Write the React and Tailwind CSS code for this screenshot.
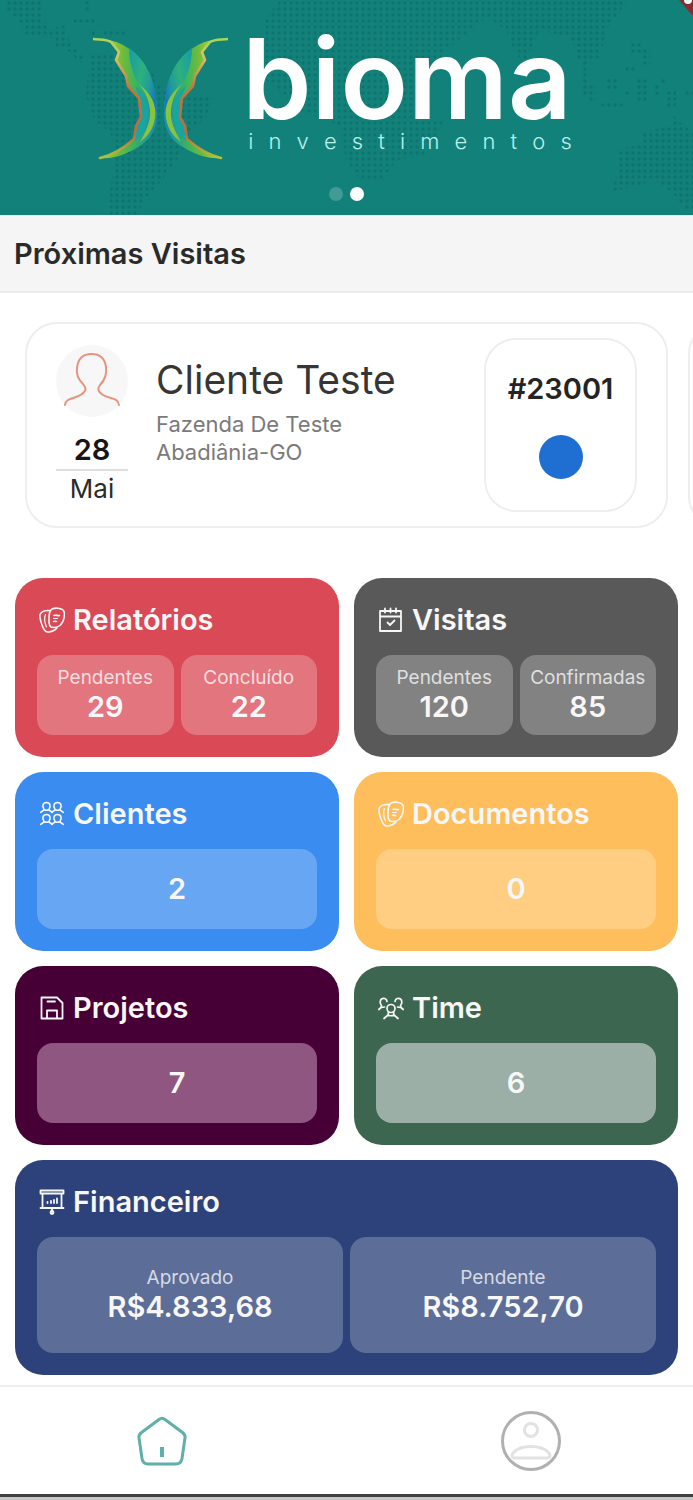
import React from "react";

function WorldDots() {
  return (
    <svg
      className="absolute inset-0 h-full w-full"
      viewBox="0 0 693 215"
      preserveAspectRatio="xMidYMid slice"
      aria-hidden="true"
    >
      <defs>
        <pattern id="dots" width="6" height="6" patternUnits="userSpaceOnUse">
          <circle cx="3" cy="3" r="1.7" fill="#0d6f6a" />
        </pattern>
      </defs>
      <g fill="url(#dots)" opacity="0.7">
        <path d="M6 0H42V22H48V30L66 24V36L78 50L86 62H80L70 52L56 46V38L26 36L18 18L6 12Z" />
        <path d="M74 18H96V24H74ZM84 0H90V12H84ZM96 24H104V36H126V30H108ZM90 30H96V36H90Z" />
        <path d="M90 54H114L150 68L162 90L190 94L212 98L206 118L190 132L180 156L162 180L144 200L138 215H110V190L116 156L110 132L94 120L86 96Z" />
        <path d="M280 0H628L606 30L600 60H582L570 38L540 30L526 60L516 56L506 30L486 18L446 50L432 80L414 110L444 122L424 156L396 160L384 180H360L346 160L340 126L300 110L266 80L262 24Z" />
        <path d="M576 36H582V60H576ZM582 60H590V96H582ZM588 84H596V102H588ZM600 102H624V108H600ZM606 78H618V90H606ZM624 66H636V72H624ZM630 42H642V54H630ZM642 48H650V66H642ZM636 78H648V102H636ZM660 78H666V84H660ZM666 90H676V108H666ZM654 84H660V96H654ZM624 90H630V96H624ZM684 90H693V96H684Z" />
        <path d="M618 150L642 144V132L672 126V114L684 126L693 132V212L684 208L672 192L654 180L636 186L610 192L618 174Z" />
      </g>
      <path d="M679 0H693V16Z" fill="#8a2b2f" />
      <circle cx="688" cy="0" r="4" fill="#e9fbfa" />
    </svg>
  );
}

function Wing() {
  return (
    <g>
      <path
        d="M0 1C22 0 38 8 49 24C60 40 65 60 64 78C63 98 52 106 38 113C28 118 18 121 7 120C24 114 33 109 41 101L43 88L48 79L46 60L35 48L33 37L23 21L26 14L18 3Z"
        fill="url(#wingBase)"
      />
      <path
        d="M36 10C50 20 58 34 62 52L64 76C60 64 56 58 50 52C42 44 36 26 36 10Z"
        fill="url(#wingSky)"
      />
      <path
        d="M42 48C52 56 56 66 55 76C54 88 50 97 42 103L44 89L49 79L47 60Z"
        fill="#16a5a0"
      />
      <path
        d="M46 46C58 56 64 66 62 80C60 92 55 98 47 104C54 92 58 82 57 72C56 61 52 54 46 46Z"
        fill="#86c53c"
      />
      <path
        d="M0 1C7 2 13 1 18 4L26 14L23 22L33 38L35 48L46 60L48 79L43 88L41 101C31 110 20 117 7 120"
        fill="none"
        stroke="url(#wingEdge)"
        strokeWidth="2.6"
        strokeLinejoin="round"
        strokeLinecap="round"
      />
    </g>
  );
}

function Butterfly() {
  return (
    <svg width="135" height="124" viewBox="0 0 135 124" className="shrink-0" aria-hidden="true">
      <defs>
        <linearGradient id="wingBase" x1="0" y1="0" x2="1" y2="0.1">
          <stop offset="0.2" stopColor="#b5cf3c" />
          <stop offset="0.5" stopColor="#69ba3d" />
          <stop offset="0.7" stopColor="#3cb45f" />
          <stop offset="1" stopColor="#1a8fae" />
        </linearGradient>
        <linearGradient id="wingSky" x1="0" y1="0.2" x2="1" y2="0.6">
          <stop offset="0" stopColor="#179fa6" />
          <stop offset="0.45" stopColor="#2fb07c" />
          <stop offset="0.75" stopColor="#1f9c9c" />
          <stop offset="1" stopColor="#1678bd" />
        </linearGradient>
        <linearGradient id="wingEdge" x1="0" y1="0" x2="0" y2="1">
          <stop offset="0" stopColor="#a9d656" />
          <stop offset="0.15" stopColor="#d8c163" />
          <stop offset="0.4" stopColor="#c5763b" />
          <stop offset="0.8" stopColor="#c0693b" />
          <stop offset="1" stopColor="#a8c43c" />
        </linearGradient>
      </defs>
      <g transform="translate(0 1)">
        <Wing />
      </g>
      <g transform="translate(135 1) scale(-1 1)">
        <Wing />
      </g>
    </svg>
  );
}

function Icon({ children, width = 1.6 }) {
  return (
    <svg
      viewBox="0 0 26 26"
      className="size-[26px] shrink-0"
      fill="none"
      stroke="currentColor"
      strokeWidth={width}
      strokeLinecap="round"
      strokeLinejoin="round"
      aria-hidden="true"
    >
      {children}
    </svg>
  );
}

function NotesIcon() {
  return (
    <Icon width={1.6}>
      <path d="M13 2C16 .8 20 1 23.500 2.600C25.500 3.800 25.800 7 25.200 10C24.800 13.500 23.500 16 21 18.500C18.500 20.500 15 20.800 12 20C10 18.500 9.800 15 10 11.500C10 8 10.500 3.500 13 2Z" />
      <path d="M10.500 3.600C6.500 3.400 2.500 4.500 1 7.500C.5 11 2 15.500 3.600 19.500C4.500 22.500 6.500 25.300 10 25C13.500 24.500 16 23.500 18 20.800" />
      <path d="M6.500 7.500C5 11 5.500 15.500 7.500 20" strokeWidth="1.2" />
      <path d="M15 8.500C17 7.500 18.500 9 20.500 8.500M14.500 14.500C15.500 14 16.500 14.500 17.500 14.500" />
      <path d="M14.500 11.500H18.500" strokeWidth="1.2" />
    </Icon>
  );
}

function CalendarIcon() {
  return (
    <Icon width={1.8}>
      <path d="M2 4H23V24H2ZM2 9.500H23M7 1.500V5.500M12.500 1.500V5.500M18 1.500V5.500M9.500 15.500L12 18L16.500 13.500" />
    </Icon>
  );
}

function MiniPerson({ x, y }) {
  return (
    <g transform={`translate(${x} ${y})`}>
      <path d="M3.200 7C1.800 5 2 1 6 1C10 1 10.200 5 8.800 7L8.600 8.500L11.800 10.800M3.200 7L3.400 8.500L.2 10.800M3.400 8C5 9 7 9 8.600 8" />
    </g>
  );
}

function PeopleIcon() {
  return (
    <Icon width={1.6}>
      <MiniPerson x={1.5} y={0.5} />
      <MiniPerson x={12.5} y={0.5} />
      <MiniPerson x={1.5} y={12.5} />
      <MiniPerson x={12.5} y={12.5} />
    </Icon>
  );
}

function SaveIcon() {
  return (
    <Icon width={1.8}>
      <path d="M2.500 2.500H18L23.500 8V23.500H2.500ZM8 23.500V15.500H18V23.500M8.500 6.500H16" />
    </Icon>
  );
}

function TeamIcon() {
  return (
    <Icon width={1.7}>
      <circle cx="13" cy="13.500" r="4" />
      <path d="M10.500 17L10 20L6 23.500M15.500 17L16 20L20 23.500M10 20C12 21 14 21 16 20" />
      <path d="M9 6.500C8.500 3.500 5.500 2.500 3.500 4C1.500 5.500 2 9 3.500 10.500L3 12.500L.8 14.500M3.500 12.500L6.500 12" />
      <path d="M17 6.500C17.500 3.500 20.500 2.500 22.500 4C24.500 5.500 24 9 22.500 10.500L23 12.500L25.200 14.500M22.500 12.500L19.500 12" />
    </Icon>
  );
}

function BoardIcon() {
  return (
    <Icon width={1.8}>
      <path d="M1.500 1.500H24.500V4.500H1.500ZM3.500 4.500V19H22.500V4.500M1.500 19H24.500M13 19V23" />
      <path d="M8.500 14V13M12 14V12M15 14V11M18 14V9.500" />
      <circle cx="13" cy="23.500" r="1.500" />
    </Icon>
  );
}

function Stat({ label, value, fill, tall }) {
  return (
    <div
      className={
        "flex flex-1 flex-col items-center justify-center rounded-2xl " +
        fill +
        (tall ? " h-[116px]" : " h-20")
      }
    >
      {label && <span className="text-[19px] leading-6 text-white/75">{label}</span>}
      <span className="text-[29px] leading-[34px] font-semibold">{value}</span>
    </div>
  );
}

function Card({ icon, title, color, fill, stats, wide }) {
  return (
    <a
      href="#"
      className={
        "block rounded-[28px] px-[22px] pt-6 pb-[22px] text-[#f7f7f7] " +
        color +
        (wide ? " col-span-2" : "")
      }
    >
      <h3 className="flex items-center gap-2 pl-0.5 text-[29px] leading-9 font-semibold">
        {icon}
        {title}
      </h3>
      <div className="mt-[17px] flex gap-[7px]">
        {stats.map(([label, value], i) => (
          <Stat key={i} label={label} value={value} fill={fill} tall={wide} />
        ))}
      </div>
    </a>
  );
}

const cards = [
  {
    title: "Relatórios",
    icon: <NotesIcon />,
    color: "bg-[#d94a56]",
    fill: "bg-[#e3757f]",
    stats: [["Pendentes", "29"], ["Concluído", "22"]],
  },
  {
    title: "Visitas",
    icon: <CalendarIcon />,
    color: "bg-[#595959]",
    fill: "bg-[#828282]",
    stats: [["Pendentes", "120"], ["Confirmadas", "85"]],
  },
  {
    title: "Clientes",
    icon: <PeopleIcon />,
    color: "bg-[#3a8cf0]",
    fill: "bg-[#67a6f3]",
    stats: [[null, "2"]],
  },
  {
    title: "Documentos",
    icon: <NotesIcon />,
    color: "bg-[#ffbe5c]",
    fill: "bg-[#ffce83]",
    stats: [[null, "0"]],
  },
  {
    title: "Projetos",
    icon: <SaveIcon />,
    color: "bg-[#470036]",
    fill: "bg-[#8e5680]",
    stats: [[null, "7"]],
  },
  {
    title: "Time",
    icon: <TeamIcon />,
    color: "bg-[#3d6650]",
    fill: "bg-[#9bafa6]",
    stats: [[null, "6"]],
  },
  {
    title: "Financeiro",
    icon: <BoardIcon />,
    color: "bg-[#2d417a]",
    fill: "bg-[#5c6d98]",
    wide: true,
    stats: [["Aprovado", "R$4.833,68"], ["Pendente", "R$8.752,70"]],
  },
];

function Banner() {
  return (
    <header className="relative bg-[#12817a] pt-[37px] pb-[14px]">
      <WorldDots />
      <div className="relative flex items-start justify-center gap-3.5 pr-7">
        <Butterfly />
        <div className="flex h-[150px] flex-col text-white">
          <h1 className="text-[111px] leading-[84px] font-semibold">bioma</h1>
          <p className="flex justify-between pt-1.5 pl-1.5 text-[22px] leading-7 font-light text-[#b9f0ea]">
            {"investimentos".split("").map((letter, i) => (
              <span key={i}>{letter}</span>
            ))}
          </p>
        </div>
      </div>
      <div className="relative flex justify-center gap-[7px]">
        <button type="button" aria-label="Slide 1" className="size-3.5 rounded-full bg-white/20" />
        <button type="button" aria-label="Slide 2" className="size-3.5 rounded-full bg-white" />
      </div>
    </header>
  );
}

function VisitCard() {
  return (
    <article className="flex h-[206px] w-full shrink-0 rounded-[32px] border-2 border-[#eeeeee] px-[29px]">
      <div className="mt-[21px] w-[72px] shrink-0 text-center">
        <div className="size-[72px] rounded-full bg-[#f7f7f7]">
          <svg
            viewBox="0 0 72 72"
            className="size-full"
            fill="none"
            stroke="#e8927f"
            strokeWidth="2"
            strokeLinecap="round"
            aria-hidden="true"
          >
            <path d="M9 60C10 52 20 54 26 49C31 45 30 43 27 39C22 34 20 29 21 23C22 13 27 9 35.500 9C45 9 49 14 50 22C51 30 48 36 44 40C41 44 42 47 47 50C53 54 62 52 63 60" />
          </svg>
        </div>
        <div className="mt-3.5 text-[29px] leading-[38px] font-semibold text-[#161616]">28</div>
        <div className="border-t-2 border-[#dedede] text-[26px] leading-9 text-[#2b2b2b]">Mai</div>
      </div>
      <div className="mt-[34px] ml-7 flex-1">
        <h3 className="text-[39px] leading-11 text-[#363636]">Cliente Teste</h3>
        <p className="mt-2 text-[22px] leading-7 text-[#7a7a7a]">
          Fazenda De Teste
          <br />
          Abadiânia-GO
        </p>
      </div>
      <div className="mt-3.5 flex h-[174px] w-[153px] shrink-0 flex-col items-center justify-center gap-7 rounded-[32px] border-2 border-[#eeeeee]">
        <span className="text-[29px] leading-9 font-semibold text-[#242424]">#23001</span>
        <span className="size-11 rounded-full bg-[#1f6fd2]" />
      </div>
    </article>
  );
}

export default function App() {
  return (
    <div className="overflow-hidden bg-white font-['Inter',sans-serif]">
      <Banner />
      <h2 className="border-t border-b-2 border-t-[#d5f5f3] border-b-[#ebebeb] bg-[#f5f5f5] px-3.5 pt-5 pb-[19px] text-[29px] leading-9 font-semibold text-[#2a2a2a]">
        Próximas Visitas
      </h2>
      <main>
        <div className="flex gap-5 overflow-hidden px-[25px] pt-[29px]">
          <VisitCard />
          <div className="w-full shrink-0 rounded-[32px] border-2 border-[#eeeeee]" />
        </div>
        <div className="mt-[50px] grid grid-cols-2 gap-[15px] px-[15px]">
          {cards.map((card) => (
            <Card key={card.title} {...card} />
          ))}
        </div>
      </main>
      <nav className="mt-2.5 flex h-[109px] items-center justify-between border-t-2 border-[#eeeeee] px-[19%]">
        <a href="#" aria-label="Início" className="flex size-[60px] items-center justify-center">
          <svg
            viewBox="0 0 52 52"
            className="size-[52px]"
            fill="none"
            stroke="#5fafaa"
            strokeWidth="3"
            strokeLinejoin="round"
            strokeLinecap="round"
            aria-hidden="true"
          >
            <path d="M23 4.500Q26 2 29 4.500L46.500 17.500Q49.500 20 49 23L46 43.500Q45 49 40 49H12Q7 49 6 43.500L3 23Q2.500 20 5.500 17.500Z" />
            <path d="M26 32V42" strokeWidth="4" strokeLinecap="butt" />
          </svg>
        </a>
        <a href="#" aria-label="Perfil" className="flex size-[60px] items-center justify-center">
          <svg viewBox="0 0 60 60" className="size-[60px]" fill="none" strokeWidth="3" aria-hidden="true">
            <g stroke="#e2e2e2">
              <circle cx="30" cy="19" r="6.500" />
              <path d="M14 47C10 47 10.500 44 12.500 41.500C20 33.500 40 33.500 47.500 41.500C49.500 44 50 47 46 47Z" />
            </g>
            <circle cx="30" cy="30" r="28.500" stroke="#b0b0b0" />
          </svg>
        </a>
      </nav>
      <div className="h-1.5 border-t-[3px] border-[#404040] bg-[#c8c8c8]" />
    </div>
  );
}
